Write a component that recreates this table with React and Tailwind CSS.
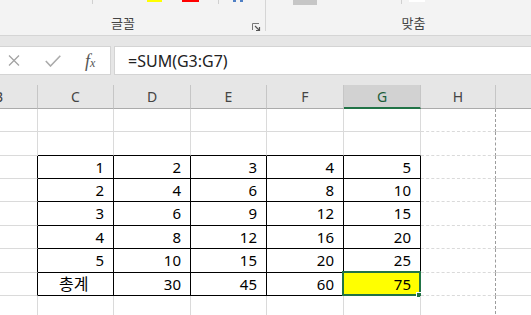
import React from "react";

const colW = ["w-[38px]", "w-[76px]", "w-[77px]", "w-[76px]", "w-[77px]", "w-[77px]", "w-[75px]", "flex-1"];
const colName = ["B", "C", "D", "E", "F", "G", "H", ""];
const rowH = ["h-[23px]", "h-[24px]", "h-[23px]", "h-[23px]", "h-[24px]", "h-[23px]", "h-[24px]", "h-[23px]", "h-[23px]"];

// rows 3..8 hold the table (C..G)
const table = [
  [1, 2, 3, 4, 5],
  [2, 4, 6, 8, 10],
  [3, 6, 9, 12, 15],
  [4, 8, 12, 16, 20],
  [5, 10, 15, 20, 25],
  ["총계", 30, 45, 60, 75],
];

const cellClass = (r, c) => {
  const inRows = r >= 2 && r <= 7;
  let right = "border-r border-r-[#dadada]";
  if (c === 7) right = "";
  else if (c === 6) right = "border-r border-dashed border-r-[#9c9c9c]";
  else if (inRows && c <= 5) right = "border-r border-r-black";
  let bottom = "border-b border-b-[#dadada]";
  if (r >= 1 && r <= 7 && c >= 1 && c <= 5) bottom = "border-b border-b-black";
  return `${colW[c]} ${right} ${bottom}`;
};

function Cell({ r, c }) {
  const v = r >= 2 && r <= 7 && c >= 1 && c <= 5 ? table[r - 2][c - 1] : null;
  const selected = r === 7 && c === 5;
  const label = typeof v === "string";
  return (
    <div
      className={`relative flex items-center shrink-0 ${cellClass(r, c)} ${
        label ? "justify-start pl-[21px]" : "justify-end pr-[9px]"
      } ${selected ? "bg-[#ffff00]" : ""}`}
    >
      {v !== null && (
        <span className={label ? "text-[16px] leading-none" : "text-[15px] leading-none"}>{v}</span>
      )}
      {selected && (
        <div className="absolute left-[-2px] top-[-2px] right-[-1px] bottom-[-1px] border-2 border-[#217346]">
          <div className="absolute right-[-3px] bottom-[-4px] w-[6px] h-[6px] bg-[#217346] border border-white" />
        </div>
      )}
    </div>
  );
}

function Launcher() {
  return (
    <svg width="9" height="9" viewBox="0 0 9 9" className="absolute right-[4px] top-[23px]">
      <path d="M0.5 7 V0.5 H7" fill="none" stroke="#777" strokeWidth="1" />
      <path d="M3 3 L7.5 7.5 M7.5 4 V7.5 H4" fill="none" stroke="#555" strokeWidth="1.2" />
    </svg>
  );
}

export default function App() {
  return (
    <div className="w-[531px] h-[315px] overflow-hidden bg-white font-['Noto_Sans','Noto_Sans_CJK_KR',sans-serif]">
      {/* ribbon */}
      <div className="flex h-[36px] bg-[#f3f3f3] border-b border-[#d5d5d5] overflow-hidden">
        <div className="relative shrink-0 ml-[-19px] w-[285px] h-[31px] border-r border-[#d5d5d5] flex flex-col">
          <div className="flex items-start h-[17px]">
            <div className="ml-[111px] w-px h-[4px] bg-[#d0d0d0]" />
            <div className="ml-[54px] w-[15px] h-[2px] bg-[#ffff00]" />
            <div className="ml-[20px] w-[17px] h-[2px] bg-[#ff0000]" />
            <div className="ml-[19px] w-px h-[4px] bg-[#d0d0d0]" />
            <div className="ml-[14px] w-[3px] h-[2px] bg-[#4f7fc4]" />
            <div className="ml-[4px] w-[3px] h-[2px] bg-[#4f7fc4]" />
          </div>
          <div className="text-center text-[13px] leading-[16px] text-[#444]">글꼴</div>
          <Launcher />
        </div>
        <div className="shrink-0 w-[295px] h-[31px] flex flex-col">
          <div className="flex items-start h-[17px]">
            <div className="ml-[27px] w-[24px] h-[5px] bg-[#c6c6c6]" />
            <div className="ml-[84px] w-px h-[4px] bg-[#d0d0d0]" />
            <div className="ml-[7px] w-[16px] h-[2px] bg-white" />
          </div>
          <div className="text-center text-[13px] leading-[16px] text-[#444]">맞춤</div>
        </div>
      </div>

      {/* formula bar */}
      <div className="bg-[#e6e6e6] pt-[10px] pb-[10px]">
        <div className="flex h-[29px]">
          <div className="w-[111px] shrink-0 bg-white border border-l-0 border-[#d4d4d4] flex items-center">
            <svg width="12" height="11" viewBox="0 0 12 11" className="ml-[8px]">
              <path d="M1 0.5 L11 10.5 M11 0.5 L1 10.5" stroke="#a3a3a3" strokeWidth="1.3" />
            </svg>
            <svg width="16" height="12" viewBox="0 0 16 12" className="ml-[25px]">
              <path d="M0.8 6 L5.5 11 L15.3 0.8" fill="none" stroke="#ababab" strokeWidth="1.6" />
            </svg>
            <span className="ml-[24px] font-['Liberation_Serif',serif] italic text-[18px] leading-none text-[#555]">
              f<span className="text-[12px]">x</span>
            </span>
          </div>
          <div className="ml-[3px] flex-1 bg-white border border-r-0 border-[#d4d4d4] flex items-center pl-[13px] text-[16px] text-[#222]">
            =SUM(G3:G7)
          </div>
        </div>
      </div>

      {/* column headers */}
      <div className="flex h-[24px] bg-[#e6e6e6]">
        {colName.map((n, c) => (
          <div
            key={c}
            className={`shrink-0 ${colW[c]} flex items-center ${c === 0 ? "justify-start" : "justify-center"} text-[14px] ${
              c === 5
                ? "bg-[#d2d2d2] border-b-2 border-[#217346] text-[#1d5e3a]"
                : "border-b border-b-[#ababab] text-[#444]"
            } ${c < 7 ? "border-r border-r-[#c6c6c6]" : ""}`}
          >
            {c === 0 ? <span className="ml-[-6px]">{n}</span> : n}
          </div>
        ))}
      </div>

      {/* grid */}
      {rowH.map((h, r) => (
        <div key={r} className={`flex ${h}`}>
          {colW.map((_, c) => (
            <Cell key={c} r={r} c={c} />
          ))}
        </div>
      ))}
    </div>
  );
}
